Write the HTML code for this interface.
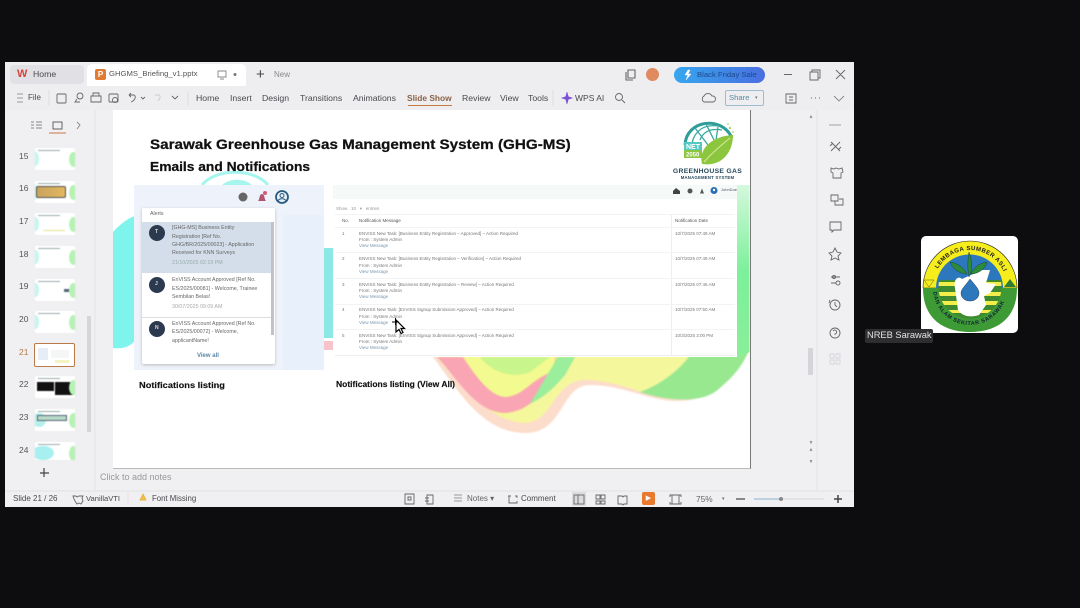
<!DOCTYPE html>
<html><head><meta charset="utf-8"><style>
html,body{margin:0;padding:0;background:#0d0d0f;width:1080px;height:608px;overflow:hidden}
#r{position:absolute;left:0;top:0;width:1080px;height:608px;filter:blur(.35px);font-family:"Liberation Sans",sans-serif;overflow:hidden}
.a,.t{position:absolute}
.t{white-space:nowrap;line-height:1;color:#4a4a4e;font-size:8.7px}
.s{position:absolute;left:0;top:0}
.w{transform-origin:0 0}
.th{position:absolute;left:35px;width:40px;height:22px;background:#fff;overflow:hidden;box-shadow:0 0 1px #ddd;filter:blur(.4px)}
.th:before{content:"";position:absolute;left:3px;top:2px;width:22px;height:1px;background:#9aa}
.th:after{content:"";position:absolute;right:-3px;top:4px;width:9px;height:15px;border-radius:50%;background:#b7f2b5}
.c{position:absolute;left:-3px;top:4px;width:7px;height:14px;border-radius:50%;background:#c5f6f0}
.n{position:absolute;left:19px;font-size:8.5px;color:#555;line-height:1;font-family:"Liberation Sans",sans-serif}
.m{font-size:4.5px;color:#777;position:absolute;white-space:nowrap;line-height:1}
.l{font-size:5.3px;color:#666;position:absolute;white-space:nowrap;line-height:1}
.b{color:#7a97ae}
</style></head><body><div id="r">
<div class="a" style="left:5px;top:62px;width:849px;height:445px;background:#f0f0f3"></div>
<div class="a" style="left:5px;top:62px;width:849px;height:48px;background:#eeeef1"></div>
<div class="a" style="left:10px;top:65px;width:74px;height:19px;background:#e1e1e5;border-radius:4px"></div>
<div class="a" style="left:87px;top:64px;width:159px;height:22px;background:#fff;border-radius:5px 5px 0 0"></div>
<div class="a" style="left:95px;top:69px;width:11px;height:11px;background:#e07c33;border-radius:2px;color:#fff;font:bold 8px/11px 'Liberation Sans';text-align:center">P</div>
<div class="t" style="left:17px;top:69px;font:bold 11px/11px 'Liberation Sans';color:#d8443c">W</div>
<div class="t" style="left:33px;top:70px">Home</div>
<div class="t" style="left:109px;top:70px;font-size:7.7px;color:#555">GHGMS_Briefing_v1.pptx</div>
<div class="t" style="left:256px;top:67px;font-size:15px;color:#444">+</div>
<div class="t" style="left:274px;top:71px;font-size:8px;color:#888">New</div>
<div class="t" style="left:28px;top:94px;font-size:8px">File</div>
<div class="t" style="left:196px;top:94px">Home</div>
<div class="t" style="left:230px;top:94px">Insert</div>
<div class="t" style="left:262px;top:94px">Design</div>
<div class="t" style="left:300px;top:94px">Transitions</div>
<div class="t" style="left:353px;top:94px">Animations</div>
<div class="t" style="left:407px;top:94px;font-weight:bold;font-size:8.4px;color:#8a6248">Slide Show</div>
<div class="a" style="left:408px;top:105px;width:44px;height:1px;background:#c8793f"></div>
<div class="t" style="left:462px;top:94px">Review</div>
<div class="t" style="left:500px;top:94px">View</div>
<div class="t" style="left:528px;top:94px">Tools</div>
<div class="t" style="left:575px;top:94px;font-size:8.5px">WPS AI</div>
<div class="a" style="left:674px;top:67px;width:91px;height:16px;border-radius:8px;background:linear-gradient(90deg,#36a6ee,#4a6fe0)"></div>
<div class="t" style="left:697px;top:71px;font-size:7.7px;color:#1b4a8a">Black Friday Sale</div>
<div class="a" style="left:646px;top:68px;width:13px;height:13px;border-radius:50%;background:#e08a60"></div>
<div class="a" style="left:725px;top:90px;width:39px;height:16px;border:1px solid #9dbcd0;border-radius:2px;box-sizing:border-box"></div>
<div class="t" style="left:729px;top:94px;font-size:7.7px;color:#5a8aa0">Share</div>
<div class="t" style="left:755px;top:96px;font-size:5px;color:#777">▾</div>
<div class="a" style="left:572px;top:492px;width:14px;height:14px;background:#dcdcdf"></div>

<svg class="s" width="1080" height="608" viewBox="0 0 1080 608" fill="none" stroke="#666" stroke-width=".9">
<path d="M17 94h6M17 98h6M17 102h6" stroke="#999"/><path d="M49 90v16" stroke="#ddd"/>
<rect x="57" y="94" width="9" height="9" rx="1"/><circle cx="80" cy="96" r="3"/><path d="M77 99l-2 3h5"/>
<path d="M91 96h10v6H91zM93 96v-3h6v3"/><rect x="109" y="94" width="9" height="8" rx="1"/><circle cx="115" cy="100" r="2.5"/>
<path d="M129 95h5c3 2 0 6-3 7M129 95l2-2M129 95l2 2M141 97l2 2 2-2" />
<path d="M155 95h4c2 1 1 4-1 6" stroke="#ccc"/><path d="M172 96l3 3 3-3"/><path d="M188 92v14" stroke="#ddd"/>
<path d="M218 71h8v6h-8zM220 79h4" stroke="#888"/><circle cx="235" cy="74.500" r="1.500" fill="#777" stroke="none"/>
<path d="M628 70h7v8h-7zM626 72v8h7" stroke-width="1.100"/>
<path d="M784 74.500h8M810 72h8v8h-8zM812 72v-2h8v8h-2M836 70l9 9M845 70l-9 9"/>
<circle cx="619" cy="97" r="3.500"/><path d="M622 100l3 3"/><path d="M553 90v16" stroke="#ddd"/>
<path d="M704 102a3.500 3.500 0 0 1 0-6a4.500 4.500 0 0 1 8 0a3 3 0 0 1 1 6z"/>
<path d="M786 94h10v9h-10zM789 97h4M789 100h4"/><path d="M811 98h1M815 98h1M819 98h1"/><path d="M834 96l5 5 5-5" stroke="#888"/>
<path d="M31 122h3M31 125h3M31 128h3M36 122h6M36 125h6M36 128h6" stroke="#888"/><rect x="53" y="122" width="9" height="7" stroke="#555"/>
<path d="M49 133h17" stroke="#c8793f"/><path d="M77 122l3 3-3 4" stroke="#888"/>
<path d="M44 468v9M40 473h9" stroke="#444" stroke-width="1.200"/>
<path d="M95 110v381" stroke="#e2e2e5"/><path d="M817 110v381" stroke="#e2e2e5"/><path d="M5 491h849" stroke="#e2e2e5"/>
<path d="M829 125h12" stroke="#999"/>
<path d="M831 142l9 9M840 142l-9 9M830 146l3-3M838 150l3-3"/><path d="M831 168l3 1 2-1 3 1 3-1 1 4-2 1v5h-8v-5l-2-1z"/>
<path d="M831 195h7v6h-7zM835 201v4h8v-6h-4"/><path d="M830 222h11v8h-7l-2 2v-2h-2z"/><path d="M835 248l2 4 4 1-3 3 1 4-4-2-4 2 1-4-3-3 4-1z"/>
<path d="M831 277h9M831 283h5"/><circle cx="834" cy="277" r="1.500"/><circle cx="838" cy="283" r="2"/>
<circle cx="835" cy="305" r="5"/><path d="M835 302v3l2 2M829 303l1-3"/><circle cx="835" cy="333" r="5"/><path d="M833 331a2 2 0 1 1 2 3v1"/>
<path d="M830 354h4v4h-4zM836 354h4v4h-4zM830 360h4v4h-4zM836 360h4v4h-4z" stroke="#d5d5da"/>
<path d="M810 118l1-2 1 2M810 441l1 2 1-2M810 451l1-2 1 2M810 460l1 2 1-2" stroke="#888"/>
<path d="M405 494h9v10h-9zM408 497h3v3h-3zM427 495h6v9h-6zM425 498h4M425 501h4"/>
<path d="M454 495h8M454 498h8M454 501h8" stroke="#999"/><path d="M508 496h3M515 496h2v2M517 501v2h-8v-7M514 503h-2"/>
<rect x="574" y="495" width="10" height="9" /><path d="M578 495v9"/><path d="M596 495h4v4h-4zM601 495h4v4h-4zM596 501h4v3h-4zM601 501h4v3h-4z"/>
<path d="M618 496h4l1 1 1-1h3v8h-3l-1 1-1-1h-4z"/><path d="M672 495h7v9h-7zM670 497v-2h2M681 497v-2h-2M670 502v2h2M681 502v2h-2"/>
<path d="M736 499h9" stroke-width="1.500"/><path d="M834 499h8M838 495v8" stroke-width="1.500" stroke="#444"/>
<path d="M754 499h26" stroke="#8cb2cc"/><path d="M780 499h44" stroke="#d5d5d8"/>
<path d="M73 496h3l1 1 2-1h4l-1 2 1 3-2 3-2-1-2 1-2-3-1-2z"/><path d="M128 493v12" stroke="#eadada"/>
<path d="M143 494l3 6h-6z" fill="#f1c04a" stroke="#e5b544"/>
<path d="M567 92l1.300 4.700 4.200 1.300-4.200 1.300-1.300 4.700-1.300-4.700-4.200-1.300 4.200-1.300z" fill="#7b4fd6" stroke="#7b4fd6" stroke-width=".5"/>
<path d="M688 70l-3 5h3l-2 5 5-6h-3l2-4z" fill="#fff" stroke="#fff" stroke-width=".5"/>
</svg>
<div class="a" style="left:779px;top:497px;width:4px;height:4px;border-radius:50%;background:#888"></div>
<div class="a" style="left:642px;top:492px;width:13px;height:13px;background:#e87a30;border-radius:2px;color:#fff;font:7px/13px 'Liberation Sans';text-align:center">▶</div>

<div class="t" style="left:100px;top:473px;font-size:9px;color:#999">Click to add notes</div>
<div class="t" style="left:13px;top:495px;font-size:8px">Slide 21 / 26</div>
<div class="t" style="left:86px;top:495px;font-size:7.6px">VanillaVTI</div>
<div class="t" style="left:152px;top:495px;font-size:7.8px">Font Missing</div>
<div class="t" style="left:467px;top:495px;font-size:8px;color:#666">Notes ▾</div>
<div class="t" style="left:521px;top:495px;font-size:8px">Comment</div>
<div class="t" style="left:696px;top:495px;font-size:8.300px;color:#666">75%</div>
<div class="t" style="left:722px;top:497px;font-size:5px;color:#666">▾</div>

<div class="n" style="top:152px">15</div><div class="n" style="top:184px">16</div><div class="n" style="top:217px">17</div><div class="n" style="top:250px">18</div><div class="n" style="top:282px">19</div><div class="n" style="top:315px">20</div><div class="n" style="top:348px;color:#b87a4a">21</div><div class="n" style="top:380px">22</div><div class="n" style="top:413px">23</div><div class="n" style="top:446px">24</div>
<div class="th" style="top:148px"><div class="c"></div></div>
<div class="th" style="top:181px"><div class="c"></div><div class="a" style="left:1px;top:5px;width:28px;height:10px;border:1px solid #555;border-radius:2px;background:linear-gradient(90deg,#c9a45c,#e2b760)"></div></div>
<div class="th" style="top:213px"><div class="c"></div><div class="a" style="left:8px;top:17px;width:22px;height:1px;background:#e6e28c"></div></div>
<div class="th" style="top:246px"><div class="c"></div></div>
<div class="th" style="top:279px"><div class="c"></div><div class="a" style="left:29px;top:10px;width:5px;height:3px;background:#567"></div></div>
<div class="th" style="top:311px"><div class="c"></div></div>
<div class="a" style="left:34px;top:343px;width:41px;height:24px;background:#fff;border:1.500px solid #b87a48;border-radius:2px;box-sizing:border-box"><div class="a" style="left:3px;top:4px;width:10px;height:12px;background:#e6edf5"></div><div class="a" style="left:16px;top:6px;width:18px;height:8px;background:#f5f6f6"></div><div class="a" style="left:20px;top:16px;width:14px;height:3px;background:#f3f4c4"></div></div>
<div class="th" style="top:376px"><div class="a" style="left:2px;top:6px;width:17px;height:9px;background:#111"></div><div class="a" style="left:20px;top:6px;width:18px;height:13px;background:#111"></div></div>
<div class="th" style="top:409px"><div class="c" style="width:14px;background:#b5f0ea"></div><div class="a" style="left:2px;top:6px;width:28px;height:4px;border:1px solid #567;background:#b8d8c8"></div></div>
<div class="th" style="top:442px;height:18px"><div class="c" style="width:22px;background:#a8f0f0"></div></div>
<div class="a" style="left:87px;top:316px;width:4px;height:116px;background:#d6d6da"></div>
<div class="a" style="left:808px;top:348px;width:5px;height:27px;background:#d5d5d9"></div>

<!-- slide -->
<div class="a" style="left:113px;top:110px;width:637px;height:358px;background:#fff;border-right:1.500px solid #777;border-bottom:1.500px solid #bbb"></div>
<svg class="s" width="1080" height="608" viewBox="0 0 1080 608">
<path d="M113 232C118 226 128 218 135 216V340C130 348 120 349 113 348Z" fill="#7ff4ec"/>
<path d="M202 185C216 168 254 168 268 185" fill="none" stroke="#a6f5ee" stroke-width="3"/><path d="M222 185C230 178 244 178 252 185Z" fill="#a6f5ee"/>
<g style="filter:blur(.7px)">
<path d="M433 357C455 385 480 433 525 433C565 433 560 385 590 385C625 385 650 402 680 401C715 400 735 375 749 350V340H433Z" fill="#fcdccb"/>
<path d="M437 357C460 385 490 422 525 423C555 421 552 381 585 380C620 380 650 399 675 399C712 398 733 372 749 352V340H437Z" fill="#f5f79c"/>
<path d="M640 392C670 402 700 402 715 392C730 380 742 368 749 350L738 355H690C680 370 660 385 640 392Z" fill="#98e890"/>
<path d="M437 357C455 375 475 413 505 413C535 411 548 385 557 357Z" fill="#f9a5b3"/>
<path d="M463 357C475 375 490 397 506 397C525 395 530 380 552 372L556 357Z" fill="#f3fa8f"/>
<path d="M480 357C490 370 510 380 530 372L550 357Z" fill="#c8f58c"/>
<path d="M558 357L530 404C548 395 556 385 565 375L575 357Z" fill="#9aee9c"/>
</g>
<defs><linearGradient id="gb" x1="0" y1="0" x2="0" y2="1"><stop offset="0" stop-color="#d5f8dd"/><stop offset=".5" stop-color="#7cf09a"/><stop offset="1" stop-color="#8aee9a"/></linearGradient></defs>
<path d="M737 185H749.500V352L737 358Z" fill="url(#gb)"/>
<path d="M324 248H333V338H324Z" fill="#8ce8e4"/><path d="M324 341H333V350H324Z" fill="#f8c4cb"/>
</svg>
<div class="a" style="left:134px;top:185px;width:190px;height:185px;background:#eef3fb"></div>
<div class="a" style="left:283px;top:215px;width:41px;height:155px;background:#e8f0fb"></div>
<div class="a" style="left:142px;top:208px;width:133px;height:156px;background:#fff;box-shadow:0 1px 3px #bbb;border-radius:2px"></div>
<div class="a" style="left:142px;top:222px;width:129px;height:51px;background:#d3deea"></div>
<div class="a" style="left:271px;top:222px;width:3px;height:113px;background:#bfc3c9"></div>
<div class="a" style="left:142px;top:317px;width:129px;height:1px;background:#ddd"></div>
<div class="a" style="left:333px;top:185px;width:404px;height:172px;background:#fff"></div>
<div class="a" style="left:333px;top:185px;width:404px;height:14px;background:#f5f9f7"></div>
<div class="a" style="left:671px;top:215px;width:1px;height:141px;background:#eee"></div>
<div class="a" style="left:335px;top:214px;width:400px;height:1px;background:#f3f3f3"></div>
<div class="a" style="left:335px;top:227px;width:400px;height:1px;background:#f3f3f3"></div>
<div class="a" style="left:335px;top:252px;width:400px;height:1px;background:#f3f3f3"></div>
<div class="a" style="left:335px;top:278px;width:400px;height:1px;background:#f3f3f3"></div>
<div class="a" style="left:335px;top:304px;width:400px;height:1px;background:#f3f3f3"></div>
<div class="a" style="left:335px;top:329px;width:400px;height:1px;background:#f3f3f3"></div>
<div class="a" style="left:335px;top:355px;width:400px;height:1px;background:#eee"></div>

<div class="t w" style="left:150px;top:137px;font-size:14px;font-weight:bold;color:#111;transform:scaleX(1.088);-webkit-text-stroke:.25px #111">Sarawak Greenhouse Gas Management System (GHG-MS)</div>
<div class="t w" style="left:150px;top:160px;font-size:13px;font-weight:bold;color:#111;transform:scaleX(1.06);-webkit-text-stroke:.25px #111">Emails and Notifications</div>
<div class="t w" style="left:139px;top:381px;font-size:8.500px;font-weight:bold;color:#111;transform:scaleX(1.09);-webkit-text-stroke:.15px #111">Notifications listing</div>
<div class="t w" style="left:336px;top:380px;font-size:8.500px;font-weight:bold;color:#111;-webkit-text-stroke:.15px #111">Notifications listing (View All)</div>

<div class="l" style="left:150px;top:212px">Alerts</div>
<svg class="s" width="1080" height="608" viewBox="0 0 1080 608">
<circle cx="157" cy="233" r="8" fill="#2c3a50"/><circle cx="157" cy="285" r="8" fill="#2c3a50"/><circle cx="157" cy="329" r="8" fill="#2c3a50"/>
<circle cx="243" cy="197" r="4.500" fill="#666"/><path d="M258 201c2-2 1-7 4-7s2 5 4 7z" fill="#b2566e"/><circle cx="265" cy="193" r="2" fill="#d65a78"/>
<circle cx="282" cy="197" r="6" fill="#e8f0f8" stroke="#2b5a80" stroke-width="1.800"/><circle cx="282" cy="195.500" r="2" fill="none" stroke="#2b5a80"/><path d="M278 201c1-3 7-3 8 0" fill="none" stroke="#2b5a80"/>
</svg>
<div class="t" style="left:155px;top:230px;font-size:5px;color:#ddd;font-weight:bold">T</div>
<div class="t" style="left:155px;top:282px;font-size:5px;color:#ddd;font-weight:bold">J</div>
<div class="t" style="left:155px;top:326px;font-size:5px;color:#ddd;font-weight:bold">N</div>
<div class="l" style="left:172px;top:226px">[GHG-MS] Business Entity</div>
<div class="l" style="left:172px;top:235px">Registration [Ref No.</div>
<div class="l" style="left:172px;top:243px">GHG/BR/2025/00023] - Application</div>
<div class="l" style="left:172px;top:251px">Received for KNN Surveys</div>
<div class="l" style="left:172px;top:261px;color:#9aa">21/10/2025 02:19 PM</div>
<div class="l" style="left:172px;top:278px">EnVISS Account Approved [Ref No.</div>
<div class="l" style="left:172px;top:287px">ES/2025/00081] - Welcome, Trainee</div>
<div class="l" style="left:172px;top:295px">Sembilan Belas!</div>
<div class="l" style="left:172px;top:305px;color:#aaa">30/07/2025 09:09 AM</div>
<div class="l" style="left:172px;top:322px">EnVISS Account Approved [Ref No.</div>
<div class="l" style="left:172px;top:330px">ES/2025/00072] - Welcome,</div>
<div class="l" style="left:172px;top:339px">applicantName!</div>
<div class="l" style="left:197px;top:353px;color:#5a86a5;font-weight:bold;font-size:6px">View all</div>

<div class="m" style="left:336px;top:207px;color:#999">Show &nbsp; 10 &nbsp; ▾ &nbsp; entries</div>
<div class="m" style="left:342px;top:219px;color:#555">No.</div><div class="m" style="left:359px;top:219px;color:#555">Notification Message</div><div class="m" style="left:675px;top:219px;color:#555">Notification Date</div>
<div class="m" style="left:342px;top:232px">1</div><div class="m" style="left:359px;top:232px">ENVISS New Task: [Business Entity Registration – Approved] – Action Required</div><div class="m" style="left:359px;top:238px">From : System Admin</div><div class="m b" style="left:359px;top:244px">View Message</div><div class="m" style="left:675px;top:232px">10/7/2025 07:49 AM</div>
<div class="m" style="left:342px;top:257px">2</div><div class="m" style="left:359px;top:257px">ENVISS New Task: [Business Entity Registration – Verification] – Action Required</div><div class="m" style="left:359px;top:264px">From : System Admin</div><div class="m b" style="left:359px;top:270px">View Message</div><div class="m" style="left:675px;top:257px">10/7/2025 07:49 AM</div>
<div class="m" style="left:342px;top:283px">3</div><div class="m" style="left:359px;top:283px">ENVISS New Task: [Business Entity Registration – Review] – Action Required</div><div class="m" style="left:359px;top:289px">From : System Admin</div><div class="m b" style="left:359px;top:295px">View Message</div><div class="m" style="left:675px;top:283px">10/7/2025 07:46 AM</div>
<div class="m" style="left:342px;top:308px">4</div><div class="m" style="left:359px;top:308px">ENVISS New Task: [EnVISS Signup Submission Approved] – Action Required</div><div class="m" style="left:359px;top:315px">From : System Admin</div><div class="m b" style="left:359px;top:321px">View Message</div><div class="m" style="left:675px;top:308px">10/7/2025 07:50 AM</div>
<div class="m" style="left:342px;top:334px">5</div><div class="m" style="left:359px;top:334px">ENVISS New Task: [EnVISS Signup Submission Approved] – Action Required</div><div class="m" style="left:359px;top:340px">From : System Admin</div><div class="m b" style="left:359px;top:346px">View Message</div><div class="m" style="left:675px;top:334px">10/3/2025 3:00 PM</div>
<div class="m" style="left:721px;top:188px;font-size:4px;color:#556">JohnDoe</div>

<svg class="s" width="1080" height="608" viewBox="0 0 1080 608">
<path d="M673 191l3-3 4 3v3h-7z" fill="#444"/><circle cx="690" cy="191" r="2.500" fill="#555"/><path d="M700 193.500l2-5 2 5z" fill="#555"/><circle cx="714" cy="190.500" r="3.500" fill="#2a6fb5"/><circle cx="714" cy="190" r="1.200" fill="#fff"/>
<path d="M396 320v12l3-2.500 2 4 2-1-2-4h3.500z" fill="#fff" stroke="#000" stroke-width="1.200"/><path d="M392 322h7M395.500 318v7" stroke="#000" stroke-width="1"/>
<!-- GHG logo -->
<path d="M685 145C686 120 722 115 732 138" fill="none" stroke="#2e9d97" stroke-width="3"/>
<path d="M692 143C695 130 705 124 718 126M700 140C703 132 710 128 722 130M695 128L708 145M706 124L714 140M718 127L716 140" fill="none" stroke="#3aa8a0" stroke-width="1.300"/>
<path d="M702 164C698 148 713 136 733 135C733 152 722 167 702 164Z" fill="#8cc63f"/><path d="M704 162C712 153 720 146 730 138" stroke="#d8ec9c" fill="none"/>
<rect x="684" y="142" width="18" height="8" fill="#55c9c1"/><rect x="684" y="150" width="18" height="8" fill="#8cc63f"/>
<text x="686" y="149" font-family="Liberation Sans" font-size="7" font-weight="bold" fill="#fff">NET</text><text x="686" y="156.500" font-family="Liberation Sans" font-size="6" font-weight="bold" fill="#fff">2050</text>
<circle cx="730" cy="128" r="1" fill="#8cc63f"/><circle cx="733" cy="132" r=".800" fill="#8cc63f"/><circle cx="728" cy="124" r=".800" fill="#8cc63f"/>
<text x="707.500" y="173" text-anchor="middle" font-family="Liberation Sans" font-size="6.800" font-weight="bold" fill="#25485a" letter-spacing=".3">GREENHOUSE GAS</text>
<text x="707.500" y="179" text-anchor="middle" font-family="Liberation Sans" font-size="4.300" font-weight="bold" fill="#25485a" letter-spacing=".2">MANAGEMENT SYSTEM</text>
</svg>

<!-- NREB -->
<div class="a" style="left:921px;top:236px;width:97px;height:97px;background:#fff;border-radius:5px"></div>
<svg class="s" width="1080" height="608" viewBox="0 0 1080 608">
<defs><path id="ta" d="M933 287A37 37 0 0 1 1007 287"/><path id="tb" d="M933 288A37 37 0 0 0 1007 288"/><clipPath id="cp"><circle cx="970" cy="287" r="31.500"/></clipPath></defs>
<path d="M923 288A47 47 0 0 1 1017 288Z" fill="#f5ee1c" stroke="#222" stroke-width=".6"/>
<path d="M936 288A33.500 33.500 0 0 1 1003 288Z" fill="#2d78bd"/>
<path d="M923 288H1017C1017 320 995 332 970 332C945 332 923 320 923 288Z" fill="#3e9a35"/>
<g clip-path="url(#cp)"><rect x="936" y="280" width="68" height="40" fill="#3e8a30"/>
<path d="M936 282H1004V286H936ZM936 292H1004V296H936ZM936 301H1004V305H936ZM936 310H1004V313H936Z" fill="#f3ee4a"/></g>
<path d="M955 288C953 280 958 275 962 279L982 270L990 270L986 283L996 284L990 293L984 296L986 305L979 315C970 318 962 316 958 310Z" fill="#fff"/>
<path d="M970 279C975 285 979 289 979 293C979 298 975 301 970 301C965 301 961 298 961 293C961 289 966 285 970 279Z" fill="#2d78bd" stroke="#123" stroke-width=".4"/>
<path d="M969 277C967 268 968 257 969 252C972 260 973 270 969 277ZM967 274C961 274 953 270 950 262C958 263 964 268 967 274ZM971 274C977 274 985 270 987 262C979 263 973 268 971 274Z" fill="#2d8a3a" stroke="#134" stroke-width=".4"/>
<path d="M924 280H934L929 287Z" fill="#f5ee1c" stroke="#333" stroke-width=".4"/><path d="M1004 287L1010 279L1016 287Z" fill="#2f7d35"/>
<text font-family="Liberation Sans" font-size="6" font-weight="bold" fill="#222" letter-spacing=".45"><textPath href="#ta" startOffset="19">LEMBAGA SUMBER ASLI</textPath></text>
<text font-family="Liberation Sans" font-size="5.500" font-weight="bold" fill="#123" letter-spacing=".6"><textPath href="#tb" startOffset="4">DAN ALAM SEKITAR SARAWAK</textPath></text>
</svg>
<div class="a" style="left:865px;top:329px;width:68px;height:14px;background:#2e2e30;border-radius:2px"></div>
<div class="t" style="left:867px;top:331px;font-size:9.300px;color:#e2e2e2">NREB Sarawak</div>
</div></body></html>
